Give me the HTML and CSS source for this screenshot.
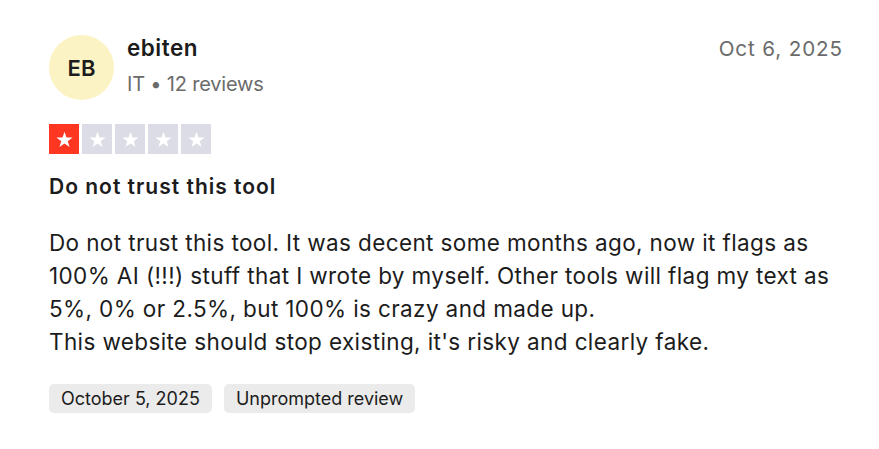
FILE: index.html
```html
<!DOCTYPE html>
<html>
<head>
<meta charset="utf-8">
<link rel="stylesheet" href="styles.css">
</head>
<body>
<article class="review">
  <header class="head">
    <div class="avatar">EB</div>
    <div class="who">
      <div class="name">ebiten</div>
      <div class="meta">IT • 12 reviews</div>
    </div>
    <div class="date">Oct 6, 2025</div>
  </header>
  <div class="stars">
    <span class="star on"><svg viewBox="0 0 24 24"><path d="M12 3.2l2.3 6.6h7l-5.6 4.1 2.1 6.7L12 16.5l-5.8 4.1 2.1-6.7L2.7 9.8h7z"/></svg></span>
    <span class="star"><svg viewBox="0 0 24 24"><path d="M12 3.2l2.3 6.6h7l-5.6 4.1 2.1 6.7L12 16.5l-5.8 4.1 2.1-6.7L2.7 9.8h7z"/></svg></span>
    <span class="star"><svg viewBox="0 0 24 24"><path d="M12 3.2l2.3 6.6h7l-5.6 4.1 2.1 6.7L12 16.5l-5.8 4.1 2.1-6.7L2.7 9.8h7z"/></svg></span>
    <span class="star"><svg viewBox="0 0 24 24"><path d="M12 3.2l2.3 6.6h7l-5.6 4.1 2.1 6.7L12 16.5l-5.8 4.1 2.1-6.7L2.7 9.8h7z"/></svg></span>
    <span class="star"><svg viewBox="0 0 24 24"><path d="M12 3.2l2.3 6.6h7l-5.6 4.1 2.1 6.7L12 16.5l-5.8 4.1 2.1-6.7L2.7 9.8h7z"/></svg></span>
  </div>
  <h2 class="title">Do not trust this tool</h2>
  <p class="body">Do not trust this tool. It was decent some months ago, now it flags as 100% AI (!!!) stuff that I wrote by myself. Other tools will flag my text as 5%, 0% or 2.5%, but 100% is crazy and made up.<br>This website should stop existing, it's risky and clearly fake.</p>
  <div class="tags">
    <span class="tag">October 5, 2025</span>
    <span class="tag">Unprompted review</span>
  </div>
</article>
</body>
</html>
```
FILE: styles.css
```css
html, body {
  margin: 0;
  padding: 0;
  background: #fff;
}
body {
  font-family: Inter, "Noto Sans", sans-serif;
  color: #1c1c1c;
}
.review {
  padding: 34px 36px 0 49px;
}
.head {
  display: flex;
  align-items: flex-start;
}
.avatar {
  width: 65px;
  height: 65px;
  margin-top: 1px;
  border-radius: 50%;
  background: #fcf3c4;
  display: flex;
  align-items: center;
  justify-content: center;
  font-size: 22px;
  font-weight: 600;
  color: #1c1c1c;
  flex: none;
}
.who {
  margin-left: 13px;
  flex: 1;
}
.name {
  font-size: 22.5px;
  font-weight: 600;
  line-height: 28px;
  letter-spacing: 0.5px;
}
.meta {
  font-size: 20px;
  color: #6b6b6b;
  line-height: 26px;
  margin-top: 9px;
  letter-spacing: -0.2px;
}
.date {
  font-size: 20.6px;
  color: #6b6b6b;
  line-height: 28px;
  margin-top: 1px;
  letter-spacing: 0.9px;
}
.stars {
  display: flex;
  gap: 3px;
  margin-top: 24px;
}
.star {
  width: 30px;
  height: 30px;
  background: #dcdce6;
  display: flex;
  align-items: center;
  justify-content: center;
}
.star.on {
  background: #ff3722;
}
.star svg {
  width: 21px;
  height: 21px;
  fill: #fff;
}
.title {
  font-size: 21px;
  font-weight: 600;
  margin: 19px 0 0;
  line-height: 28px;
  letter-spacing: 1px;
}
.body {
  font-size: 22.5px;
  line-height: 33px;
  margin: 25px 0 0;
  letter-spacing: 0.38px;
  color: #1c1c1c;
}
.tags {
  display: flex;
  gap: 12px;
  margin-top: 26px;
}
.tag {
  background: #ebebeb;
  border-radius: 5px;
  font-size: 18px;
  line-height: 29px;
  padding: 0 12px;
  color: #1c1c1c;
}
```
